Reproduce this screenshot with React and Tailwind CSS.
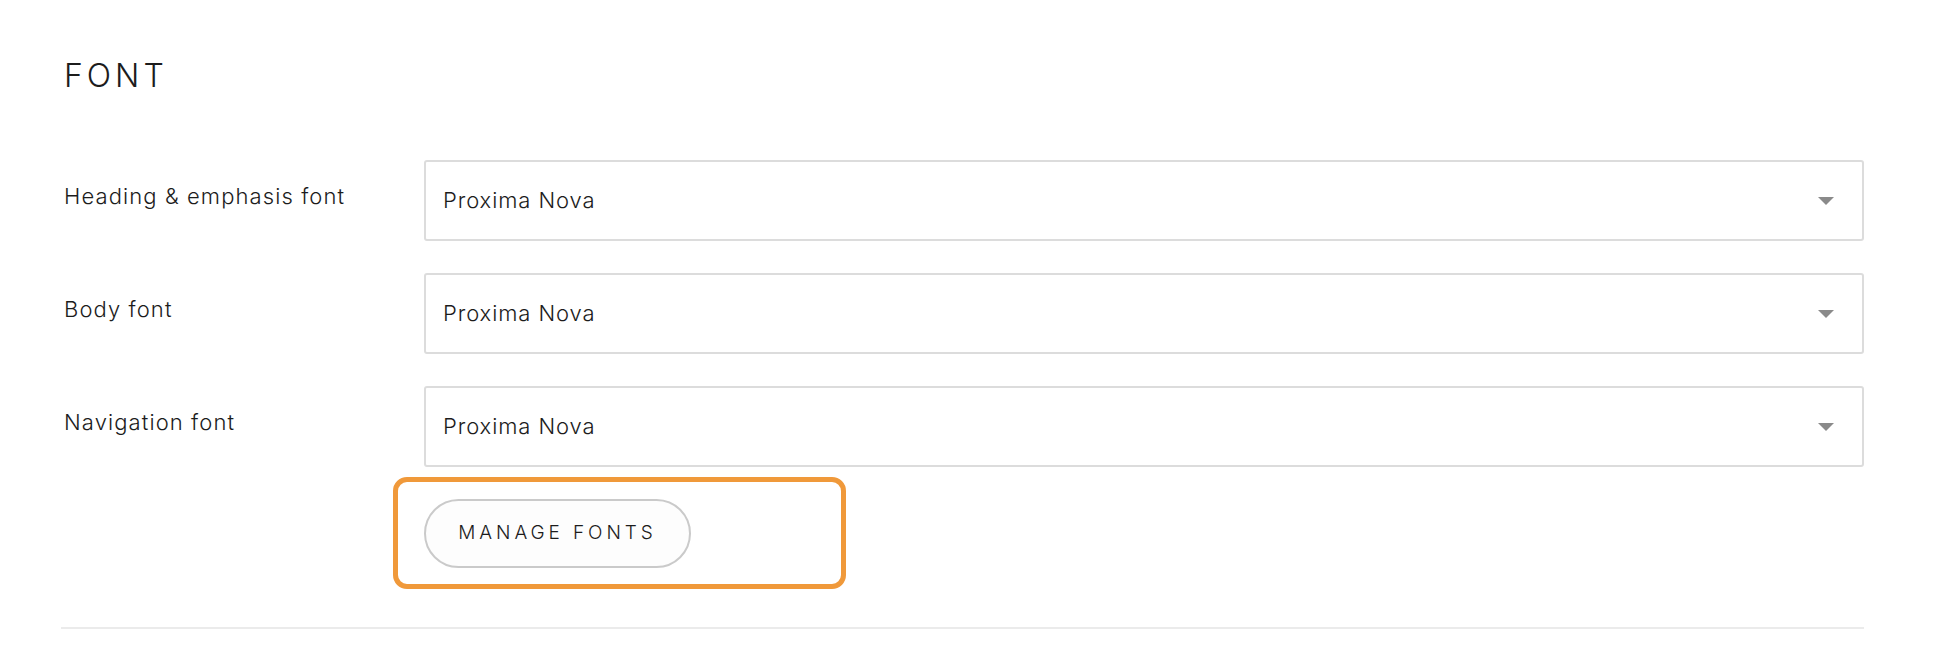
import { useState } from 'react';

const fontRows = [
  { id: 'heading', label: 'Heading & emphasis font', value: 'Proxima Nova' },
  { id: 'body', label: 'Body font', value: 'Proxima Nova' },
  { id: 'nav', label: 'Navigation font', value: 'Proxima Nova' },
];

const Caret = () => (
  <svg width="16" height="8" viewBox="0 0 16 8" className="shrink-0">
    <path d="M0 0 H16 L8 8 Z" fill="#8a8a8a" />
  </svg>
);

const FontSelect = ({ value }) => (
  <div className="flex h-[81px] flex-1 items-center justify-between rounded-[3px] border-2 border-[#dcdcdc] bg-white pl-[17px] pr-[28px]">
    <span className="text-[22px] tracking-[0.9px] text-[#1c1c1c]">{value}</span>
    <Caret />
  </div>
);

export default function App() {
  const [rows] = useState(fontRows);

  return (
    <div className="min-h-[646px] bg-white pl-[64px] pr-[78px] pt-[54px] font-['Inter','Liberation_Sans',sans-serif] font-[350] text-[#1c1c1c]">
      <h2 className="text-[32px] font-light leading-[44px] tracking-[4px]">FONT</h2>

      <div className="mt-[62px] flex flex-col gap-[32px]">
        {rows.map((row) => (
          <div key={row.id} className="flex">
            <div className="w-[360px] shrink-0 pt-[22px] text-[22px] leading-[28px] tracking-[1.1px]">{row.label}</div>
            <FontSelect value={row.value} />
          </div>
        ))}
      </div>

      <div className="mt-[10px] flex">
        <div className="w-[360px] shrink-0" />
        {/* highlight around the manage button */}
        <div className="-ml-[31px] flex h-[112px] w-[453px] items-center rounded-[14px] border-[5px] border-[#f0993a] pl-[26px]">
          <button className="flex h-[69px] w-[267px] items-center justify-center rounded-full border-2 border-[#cacaca] bg-[#fdfdfd] text-[19px] tracking-[3.9px] text-[#1c1c1c]">
            MANAGE FONTS
          </button>
        </div>
      </div>

      <div className="mt-[38px] -ml-[3px] h-[2px] bg-[#ebebeb]" />
    </div>
  );
}
